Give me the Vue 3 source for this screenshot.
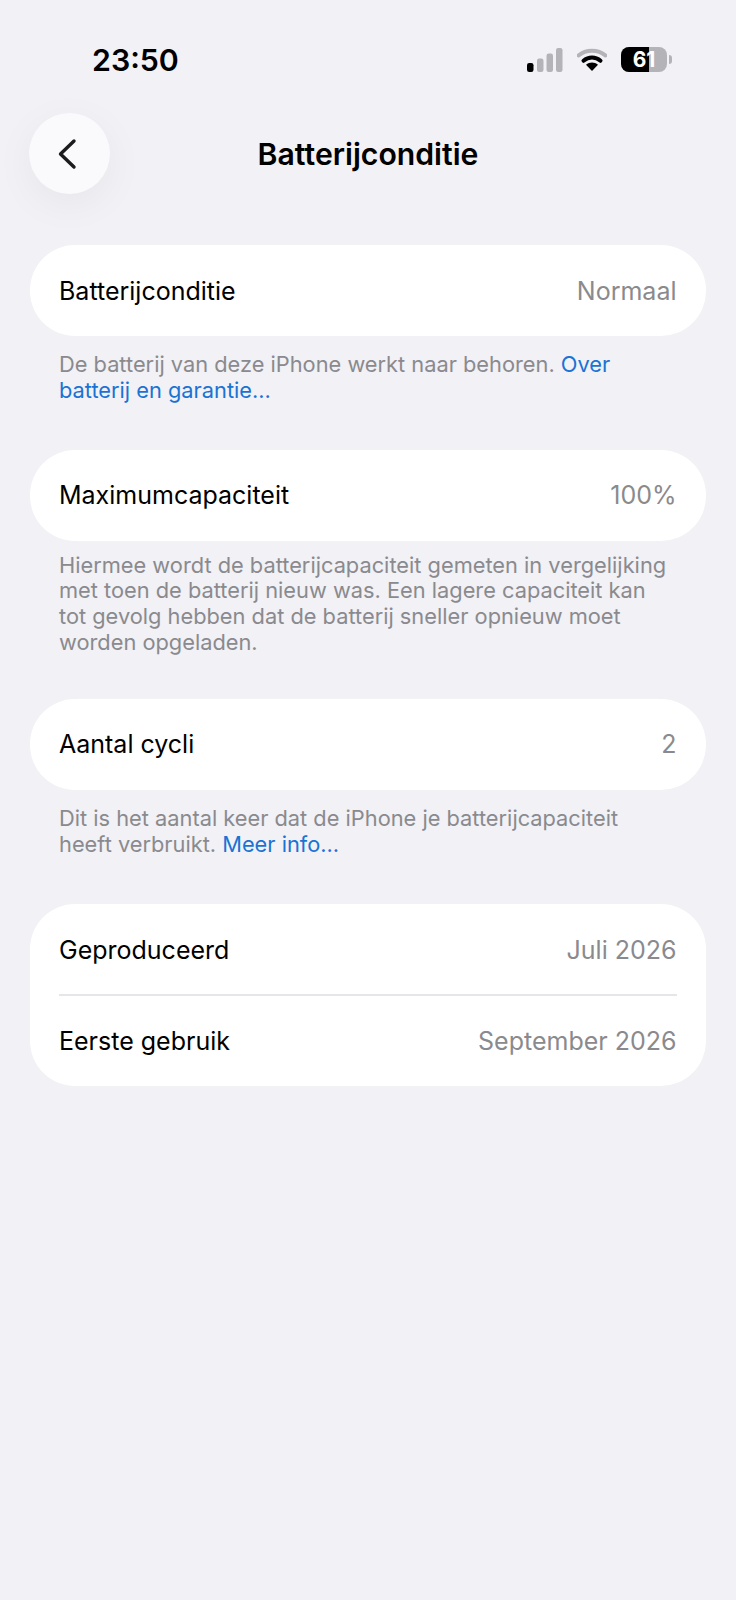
<script setup>
const rows = {
  condition: { label: 'Batterijconditie', value: 'Normaal' },
  capacity: { label: 'Maximumcapaciteit', value: '100%' },
  cycles: { label: 'Aantal cycli', value: '2' },
}
const dates = [
  { label: 'Geproduceerd', value: 'Juli 2026' },
  { label: 'Eerste gebruik', value: 'September 2026' },
]
</script>

<template>
  <div class="page">
    <!-- Status bar -->
    <div class="status">
      <span class="time">23:50</span>
      <div class="status-icons">
        <svg class="signal" width="36" height="24" viewBox="0 0 36 24">
          <rect x="0" y="15" width="6.500" height="9" rx="2.200" fill="#000" />
          <rect x="10" y="10.500" width="6.500" height="13.500" rx="2.200" fill="#b4b4b8" />
          <rect x="19.500" y="5.500" width="6.500" height="18.500" rx="2.200" fill="#b4b4b8" />
          <rect x="29" y="0" width="6.500" height="24" rx="2.200" fill="#b4b4b8" />
        </svg>
        <svg class="wifi" width="30" height="23" viewBox="0 0 30 23">
          <path d="M1.500 7.500C9 1 21 1 28.500 7.500" fill="none" stroke="#b4b4b8" stroke-width="4" stroke-linecap="round" />
          <path d="M6.500 12.800C11.500 8.500 18.500 8.500 23.500 12.800" fill="none" stroke="#000" stroke-width="4" stroke-linecap="round" />
          <path d="M15 23l-6-6.300C12.500 13.800 17.500 13.800 21 16.700z" fill="#000" />
        </svg>
        <div class="battery">
          <div class="battery-body">
            <div class="battery-fill"></div>
            <span class="battery-text">61</span>
          </div>
          <div class="battery-nub"></div>
        </div>
      </div>
    </div>

    <!-- Nav -->
    <div class="nav">
      <button class="back">
        <svg class="chevron" width="22" height="32" viewBox="0 0 22 32">
          <path d="M18 3L4.500 16 18 29" fill="none" stroke="#1c1c1e" stroke-width="3.400" stroke-linecap="round" stroke-linejoin="round" />
        </svg>
      </button>
      <h1 class="title">Batterijconditie</h1>
    </div>

    <div class="content">
      <section class="group">
        <div class="card">
          <div class="row">
            <span>{{ rows.condition.label }}</span>
            <span class="value">{{ rows.condition.value }}</span>
          </div>
        </div>
        <p class="note">De batterij van deze iPhone werkt naar behoren. <a>Over batterij en garantie...</a></p>
      </section>

      <section class="group">
        <div class="card">
          <div class="row">
            <span>{{ rows.capacity.label }}</span>
            <span class="value">{{ rows.capacity.value }}</span>
          </div>
        </div>
        <p class="note tight">Hiermee wordt de batterijcapaciteit gemeten in vergelijking met toen de batterij nieuw was. Een lagere capaciteit kan tot gevolg hebben dat de batterij sneller opnieuw moet worden opgeladen.</p>
      </section>

      <section class="group">
        <div class="card">
          <div class="row">
            <span>{{ rows.cycles.label }}</span>
            <span class="value">{{ rows.cycles.value }}</span>
          </div>
        </div>
        <p class="note">Dit is het aantal keer dat de iPhone je batterijcapaciteit heeft verbruikt. <a>Meer info...</a></p>
      </section>

      <section class="group last">
        <div class="card">
          <template v-for="(item, index) in dates" :key="item.label">
            <div v-if="index > 0" class="divider"></div>
            <div class="row">
              <span>{{ item.label }}</span>
              <span class="value">{{ item.value }}</span>
            </div>
          </template>
        </div>
      </section>
    </div>
  </div>
</template>

<style>
html,
body {
  margin: 0;
  background: #f1f1f6;
}
</style>

<style scoped>
.page {
  width: 736px;
  height: 1600px;
  overflow: hidden;
  background: #f1f1f6;
  font-family: Inter, "Liberation Sans", sans-serif;
  color: #000;
}

.status {
  height: 113px;
  box-sizing: border-box;
  padding: 0 64px 0 92px;
  display: flex;
  align-items: flex-start;
  justify-content: space-between;
}

.time {
  margin-top: 42px;
  font-size: 30.300px;
  line-height: 37px;
  font-weight: 600;
}

.status-icons {
  margin-top: 47px;
  display: flex;
  align-items: center;
  gap: 14px;
}

.battery {
  display: flex;
  align-items: center;
  gap: 2px;
}

.battery-body {
  position: relative;
  width: 46px;
  height: 25px;
  border-radius: 8px;
  overflow: hidden;
  background: #b4b4b8;
  display: flex;
  align-items: center;
  justify-content: center;
}

.battery-fill {
  position: absolute;
  left: 0;
  top: 0;
  bottom: 0;
  width: 28px;
  background: #000;
}

.battery-text {
  position: relative;
  color: #fff;
  font-size: 21px;
  font-weight: 700;
}

.battery-nub {
  width: 3px;
  height: 9px;
  border-radius: 0 3px 3px 0;
  background: #b4b4b8;
}

.nav {
  position: relative;
  height: 81px;
  padding: 0 29px;
  display: flex;
  align-items: center;
}

.back {
  width: 81px;
  height: 81px;
  padding: 0;
  border: none;
  border-radius: 50%;
  background: #fafafd;
  box-shadow: 0 10px 40px rgba(0, 0, 0, 0.05);
  display: flex;
  align-items: center;
  justify-content: center;
}

.chevron {
  margin-left: -5px;
}

.title {
  position: absolute;
  left: 0;
  right: 0;
  margin: 0;
  text-align: center;
  font-size: 30.200px;
  line-height: 40px;
  font-weight: 600;
}

.content {
  padding: 51px 30px 0 29.500px;
  display: flex;
  flex-direction: column;
  gap: 46px;
}

.group.last {
  margin-top: 1px;
}

.card {
  background: #fff;
  border-radius: 45px;
}

.row {
  height: 91px;
  box-sizing: border-box;
  padding: 0 29.500px;
  display: flex;
  align-items: center;
  justify-content: space-between;
  font-size: 25px;
}

.value {
  color: #8a8a8e;
}

.divider {
  height: 2px;
  margin: 0 29.500px -2px;
  background: #e6e6e9;
  position: relative;
  top: -1px;
}

.note {
  margin: 16px 29.500px 0;
  font-size: 21.800px;
  line-height: 25.800px;
  color: #8a8a8e;
}

.note.tight {
  margin-top: 12px;
  margin-bottom: -3px;
}

.note a {
  color: #1a73d4;
}
</style>
